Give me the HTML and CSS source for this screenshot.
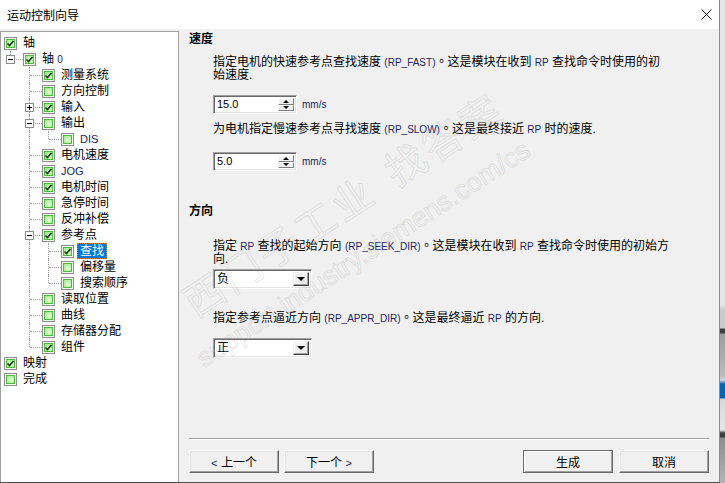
FILE: index.html
```html
<!DOCTYPE html>
<html>
<head>
  <title>运动控制向导</title>
  <link rel="stylesheet" href="styles.css">
</head>
<body>
  <!-- Wizard window -->
  <div class="window">
    <div class="titlebar">
      <span class="title">运动控制向导</span>
      <svg class="close" viewBox="0 0 11 11"><path d="M0.5 0.5L10.5 10.5M10.5 0.5L0.5 10.5"/></svg>
    </div>

    <div class="main">
      <!-- Left tree of wizard steps -->
      <div class="tree">
        <div class="node"><span class="cb on"><svg viewBox="0 0 9 9"><path d="M1.5 4.5l2 2 4-4.5"/></svg></span><span class="lbl">轴</span></div>
        <div class="node"><i class="ln l"><b class="exp"></b></i><span class="cb on"><svg viewBox="0 0 9 9"><path d="M1.5 4.5l2 2 4-4.5"/></svg></span><span class="lbl">轴 <span class="en">0</span></span></div>
        <div class="node"><i class="ln"></i><i class="ln t"></i><span class="cb on"><svg viewBox="0 0 9 9"><path d="M1.5 4.5l2 2 4-4.5"/></svg></span><span class="lbl">测量系统</span></div>
        <div class="node"><i class="ln"></i><i class="ln t"></i><span class="cb"></span><span class="lbl">方向控制</span></div>
        <div class="node"><i class="ln"></i><i class="ln t"><b class="exp plus"></b></i><span class="cb on"><svg viewBox="0 0 9 9"><path d="M1.5 4.5l2 2 4-4.5"/></svg></span><span class="lbl">输入</span></div>
        <div class="node"><i class="ln"></i><i class="ln t"><b class="exp"></b></i><span class="cb"></span><span class="lbl">输出</span></div>
        <div class="node"><i class="ln"></i><i class="ln i"></i><i class="ln l"></i><span class="cb"></span><span class="lbl en">DIS</span></div>
        <div class="node"><i class="ln"></i><i class="ln t"></i><span class="cb on"><svg viewBox="0 0 9 9"><path d="M1.5 4.5l2 2 4-4.5"/></svg></span><span class="lbl">电机速度</span></div>
        <div class="node"><i class="ln"></i><i class="ln t"></i><span class="cb on"><svg viewBox="0 0 9 9"><path d="M1.5 4.5l2 2 4-4.5"/></svg></span><span class="lbl en">JOG</span></div>
        <div class="node"><i class="ln"></i><i class="ln t"></i><span class="cb on"><svg viewBox="0 0 9 9"><path d="M1.5 4.5l2 2 4-4.5"/></svg></span><span class="lbl">电机时间</span></div>
        <div class="node"><i class="ln"></i><i class="ln t"></i><span class="cb"></span><span class="lbl">急停时间</span></div>
        <div class="node"><i class="ln"></i><i class="ln t"></i><span class="cb"></span><span class="lbl">反冲补偿</span></div>
        <div class="node"><i class="ln"></i><i class="ln t"><b class="exp"></b></i><span class="cb on"><svg viewBox="0 0 9 9"><path d="M1.5 4.5l2 2 4-4.5"/></svg></span><span class="lbl">参考点</span></div>
        <div class="node"><i class="ln"></i><i class="ln i"></i><i class="ln t"></i><span class="cb on"><svg viewBox="0 0 9 9"><path d="M1.5 4.5l2 2 4-4.5"/></svg></span><span class="lbl selected">查找</span></div>
        <div class="node"><i class="ln"></i><i class="ln i"></i><i class="ln t"></i><span class="cb"></span><span class="lbl">偏移量</span></div>
        <div class="node"><i class="ln"></i><i class="ln i"></i><i class="ln l"></i><span class="cb"></span><span class="lbl">搜索顺序</span></div>
        <div class="node"><i class="ln"></i><i class="ln t"></i><span class="cb"></span><span class="lbl">读取位置</span></div>
        <div class="node"><i class="ln"></i><i class="ln t"></i><span class="cb"></span><span class="lbl">曲线</span></div>
        <div class="node"><i class="ln"></i><i class="ln t"></i><span class="cb"></span><span class="lbl">存储器分配</span></div>
        <div class="node"><i class="ln"></i><i class="ln l"></i><span class="cb on"><svg viewBox="0 0 9 9"><path d="M1.5 4.5l2 2 4-4.5"/></svg></span><span class="lbl">组件</span></div>
        <div class="node"><span class="cb on"><svg viewBox="0 0 9 9"><path d="M1.5 4.5l2 2 4-4.5"/></svg></span><span class="lbl">映射</span></div>
        <div class="node"><span class="cb"></span><span class="lbl">完成</span></div>
      </div>

      <!-- Page content -->
      <div class="content">
        <h2>速度</h2>
        <p class="desc">指定电机的快速参考点查找速度 <span class="en">(RP_FAST)</span><span class="stop">。</span>这是模块在收到 <span class="en">RP</span> 查找命令时使用的初始速度.</p>
        <div class="field fast">
          <div class="spin"><span class="val en">15.0</span><span class="arrows"><i class="up"></i><i class="down"></i></span></div>
          <span class="en">mm/s</span>
        </div>
        <p class="desc slow">为电机指定慢速参考点寻找速度 <span class="en">(RP_SLOW)</span><span class="stop">。</span>这是最终接近 <span class="en">RP</span> 时的速度.</p>
        <div class="field slow">
          <div class="spin"><span class="val en">5.0</span><span class="arrows"><i class="up"></i><i class="down"></i></span></div>
          <span class="en">mm/s</span>
        </div>

        <h2 class="dir">方向</h2>
        <p class="desc seek">指定 <span class="en">RP</span> 查找的起始方向 <span class="en">(RP_SEEK_DIR)</span><span class="stop">。</span>这是模块在收到 <span class="en">RP</span> 查找命令时使用的初始方向.</p>
        <div class="combo seek"><span class="val">负</span><span class="drop"></span></div>
        <p class="desc appr">指定参考点逼近方向 <span class="en">(RP_APPR_DIR)</span><span class="stop">。</span>这是最终逼近 <span class="en">RP</span> 的方向.</p>
        <div class="combo appr"><span class="val">正</span><span class="drop"></span></div>

        <div class="footer">
          <div class="sep"></div>
          <div class="buttons">
            <button class="btn"><span class="en">&lt;</span> 上一个</button>
            <button class="btn">下一个 <span class="en">&gt;</span></button>
            <span class="spacer"></span>
            <button class="btn default">生成</button>
            <button class="btn">取消</button>
          </div>
        </div>

        <!-- faint site watermark laid over the page -->
        <div class="watermark">
          <div class="wm-cn">西门子工业<span class="wm-gap"></span>找答案</div>
          <div class="wm-url">support.industry.siemens.com/cs</div>
        </div>
      </div>
    </div>
  </div>
  <div class="desktop"></div>
</body>
</html>
```

FILE: styles.css
```css
body {
  margin: 0;
  width: 725px;
  height: 483px;
  overflow: hidden;
  display: flex;
  font-family: "Liberation Sans", "Noto Sans CJK SC", sans-serif;
  font-size: 12px;
  color: #000;
}
.window {
  width: 720px;
  height: 483px;
  box-sizing: border-box;
  border-right: 1px solid #8a8a8a;
  border-bottom: 1px solid #4c4c4c;
  background: #f0f0f0;
  display: flex;
  flex-direction: column;
}
.desktop {
  flex: 1;
  background: linear-gradient(to bottom, #e4e4e4 0, #e4e4e4 305px, #cbcbcb 310px, #cbcbcb 328px, #3e3e3e 329px, #3e3e3e 333px, #9c9c9c 334px, #bcbcbc 376px, #d0d8e4 380px, #0a64b4 384px, #0a64b4 398px, #d8d8d8 399px, #e6e6e6 430px, #3e3e3e 433px, #3e3e3e 437px, #8c8c8c 438px, #b4b4b4 483px);
}

/* title bar */
.titlebar {
  height: 29px;
  flex: none;
  background: #fff;
  display: flex;
  align-items: center;
  justify-content: space-between;
  padding: 0 7px 0 7px;
}
.title {
  font-family: "Noto Sans CJK SC", sans-serif;
  font-size: 12px;
}
.close {
  width: 11px;
  height: 11px;
  stroke: #111;
  stroke-width: 1;
  fill: none;
}

.main {
  flex: 1;
  display: flex;
}

/* tree */
.tree {
  width: 179px;
  box-sizing: border-box;
  margin-top: 2px;
  border: 1px solid #a0a0a0;
  border-bottom: none;
  background: #fff;
  padding: 3px 0 0 3px;
}
.node {
  display: flex;
  align-items: center;
  height: 16px;
}
.ln {
  width: 19px;
  height: 16px;
  flex: none;
  position: relative;
}
.ln.i::before, .ln.t::before, .ln.l::before {
  content: "";
  position: absolute;
  left: 6px;
  top: 0;
  height: 16px;
  border-left: 1px dotted #a0a0a0;
}
.ln.l::before {
  height: 8px;
}
.ln.t::after, .ln.l::after {
  content: "";
  position: absolute;
  left: 7px;
  right: 0;
  top: 8px;
  border-top: 1px dotted #a0a0a0;
}
.exp {
  position: absolute;
  left: 2px;
  top: 4px;
  width: 9px;
  height: 9px;
  box-sizing: border-box;
  border: 1px solid #8c8c8c;
  background: #fff;
  z-index: 1;
}
.exp::before {
  content: "";
  position: absolute;
  left: 1px;
  top: 3px;
  width: 5px;
  height: 1px;
  background: #000;
}
.exp.plus::after {
  content: "";
  position: absolute;
  left: 3px;
  top: 1px;
  width: 1px;
  height: 5px;
  background: #000;
}
.cb {
  width: 13px;
  height: 13px;
  flex: none;
  box-sizing: border-box;
  border: 1px solid #8e8e8e;
  box-shadow: inset 0 0 0 1px #f4fff0, inset 0 0 0 2px #4cba3e;
  background: radial-gradient(circle at 55% 55%, #e6ffdc 0, #a9ec92 55%, #6fd456 100%);
  display: flex;
  align-items: center;
  justify-content: center;
}
.cb svg {
  width: 9px;
  height: 9px;
  fill: none;
  stroke: #1d3a1a;
  stroke-width: 1.7;
}
.lbl {
  margin-left: 3px;
  padding: 0 2px;
  line-height: 14px;
  border: 1px solid transparent;
  white-space: nowrap;
}
.lbl.en {
  font-size: 11px;
}
.lbl.selected {
  background: #0078d7;
  color: #fff;
  border: 1px dotted #d8852a;
}

/* content */
.content {
  flex: 1;
  display: flex;
  flex-direction: column;
  padding: 3px 10px 9px 10px;
  position: relative;
}
h2 {
  margin: 0;
  font-size: 12px;
  font-weight: bold;
  line-height: 14px;
}
h2.dir {
  margin-top: 33px;
}
.desc {
  margin: 8px 0 0 24px;
  width: 455px;
  height: 13px;
  line-height: 13px;
}
.desc.seek, .desc:first-of-type {
  height: 26px;
}
.desc.slow {
  margin-top: 7px;
}
.desc.seek {
  margin-top: 20px;
  width: 470px;
}
.desc.appr {
  margin-top: 21px;
}
.en {
  font-size: 10px;
  color: #202462;
}
.stop {
  font-family: "Noto Sans CJK TC", sans-serif;
}
.field {
  display: flex;
  align-items: center;
  gap: 5px;
  height: 19px;
  margin-left: 24px;
}
.field.fast {
  margin-top: 15px;
}
.field.slow {
  margin-top: 18px;
}

/* sunken edit and combo boxes */
.spin, .combo {
  display: flex;
  box-sizing: border-box;
  border: 1px solid;
  border-color: #a0a0a0 #fff #fff #a0a0a0;
  box-shadow: inset 1px 1px #696969, inset -1px -1px #e3e3e3;
  background: #fff;
  padding: 2px;
}
.spin {
  width: 84px;
  height: 19px;
}
.val {
  flex: 1;
  line-height: 13px;
  padding-left: 1px;
}
.spin .val {
  font-size: 11px;
  color: #000;
}
.arrows {
  width: 16px;
  display: flex;
  flex-direction: column;
}
.arrows i {
  flex: 1;
  display: flex;
  align-items: center;
  justify-content: center;
  box-sizing: border-box;
  background: #f0f0f0;
  border: 1px solid;
  border-color: #fff #808080 #808080 #fff;
}
.arrows .up::after {
  content: "";
  border-left: 3px solid transparent;
  border-right: 3px solid transparent;
  border-bottom: 3px solid #000;
}
.arrows .down::after {
  content: "";
  border-left: 3px solid transparent;
  border-right: 3px solid transparent;
  border-top: 3px solid #000;
}
.combo {
  width: 99px;
  height: 20px;
  margin-left: 24px;
}
.combo .val {
  line-height: 15px;
}
.combo.seek {
  margin-top: 5px;
}
.combo.appr {
  margin-top: 15px;
}
.drop {
  width: 16px;
  box-sizing: border-box;
  display: flex;
  align-items: center;
  justify-content: center;
  background: #f0f0f0;
  border: 1px solid;
  border-color: #f0f0f0 #404040 #404040 #f0f0f0;
  box-shadow: inset -1px -1px #a0a0a0, inset 1px 1px #fff;
}
.drop::after {
  content: "";
  border-left: 4px solid transparent;
  border-right: 4px solid transparent;
  border-top: 4px solid #000;
}

/* footer */
.footer {
  margin-top: auto;
}
.sep {
  border-top: 1px solid #a0a0a0;
  border-bottom: 1px solid #fff;
}
.buttons {
  display: flex;
  gap: 5px;
  margin-top: 10px;
}
.spacer {
  flex: 1;
}
.btn {
  width: 90px;
  height: 23px;
  box-sizing: border-box;
  font-family: "Liberation Sans", "Noto Sans CJK SC", sans-serif;
  font-size: 12px;
  color: #000;
  padding: 0;
  background: #f0f0f0;
  border: 1px solid;
  border-color: #fff #696969 #696969 #fff;
  box-shadow: inset -1px -1px #a0a0a0, inset 1px 1px #e3e3e3;
}
.btn .en {
  font-size: 11px;
}
.btn.default {
  border-color: #696969;
  box-shadow: inset 1px 1px #fff, inset -1px -1px #a0a0a0;
  margin-right: 1px;
}

/* watermark */
.watermark {
  position: absolute;
  left: -5px;
  top: 256px;
  transform: rotate(-33deg);
  transform-origin: 0 0;
  pointer-events: none;
  color: transparent;
  -webkit-text-stroke: 1px rgba(160, 160, 160, 0.22);
  white-space: nowrap;
  font-family: "Noto Sans CJK SC", sans-serif;
}
.wm-cn {
  font-size: 40px;
  line-height: 46px;
  letter-spacing: 4px;
}
.wm-gap {
  display: inline-block;
  width: 20px;
}
.wm-url {
  font-family: "Liberation Sans", sans-serif;
  font-size: 27px;
  line-height: 30px;
  margin: 16px 0 0 -20px;
}
```
